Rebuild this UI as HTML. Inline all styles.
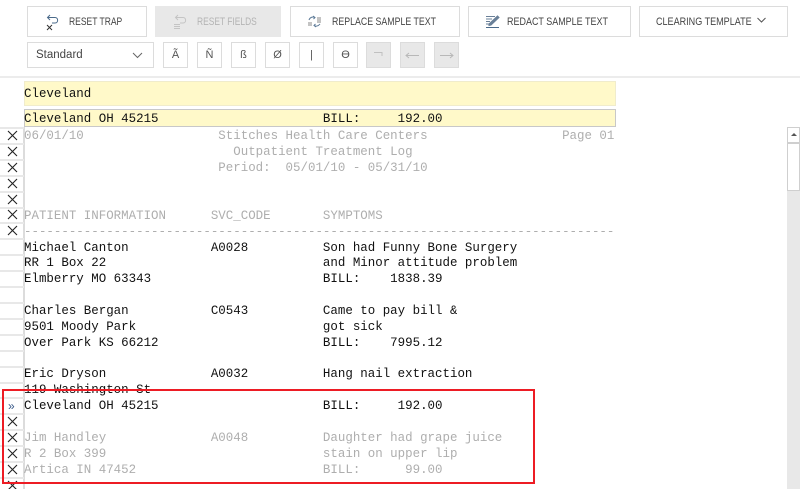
<!DOCTYPE html>
<html><head><meta charset="utf-8"><style>
html,body{margin:0;padding:0;background:#fff}
#p{position:relative;width:800px;height:489px;overflow:hidden;background:#fff;font-family:"Liberation Sans",sans-serif}
.a{position:absolute;box-sizing:border-box}
.b{position:absolute;box-sizing:border-box;border:1px solid #dcdcdc;background:#fff;height:31px;top:6px}
.t{position:absolute;white-space:pre;font-size:11px;line-height:12px;color:#444;top:16px;transform-origin:0 50%}
.c{position:absolute;box-sizing:border-box;top:42px;height:26px;width:25px;border:1px solid #dcdcdc;background:#fff;text-align:center;font-size:11px;line-height:25px;color:#555}
.d{background:#e8e8e8}
.l{position:absolute;left:24px;white-space:pre;font-family:"Liberation Mono",monospace;font-size:12.46px;line-height:16px;color:#111;height:16px;max-width:592px;overflow:hidden}
.g{color:#aeaeae}
.s{position:absolute;left:0;width:24px;height:2px;background:#e8e8e8}
</style></head><body><div id="p">

<div class="b" style="left:27px;width:120px"></div>
<svg class="a" style="left:45px;top:13px" width="15" height="18" viewBox="0 0 15 18" fill="none" stroke="#4a6a8a" stroke-width="1"><path d="M5 2L2.500 4.500L5 7M3 4.500H10C13.500 4.500 13.500 10 10 10H7"/><path d="M2 12L7 17M7 12L2 17" stroke="#333"/></svg>
<div class="t" style="left:69px;transform:scaleX(.775)">RESET TRAP</div>

<div class="b" style="left:155px;width:126px;background:#e8e8e8;border-color:#e8e8e8"></div>
<svg class="a" style="left:173px;top:13px" width="15" height="18" viewBox="0 0 15 18" fill="none" stroke="#c4c4c4" stroke-width="1"><path d="M5 2L2.500 4.500L5 7M3 4.500H10C13.500 4.500 13.500 10 10 10H7"/><path d="M1 11.500H7M1 13.500H7M1 15.500H7"/></svg>
<div class="t" style="left:197px;color:#b4b4b4;transform:scaleX(.766)">RESET FIELDS</div>

<div class="b" style="left:290px;width:170px"></div>
<svg class="a" style="left:307px;top:15px" width="15" height="13" viewBox="0 0 15 13" fill="none" stroke="#5a7896" stroke-width="1"><path d="M2 5C3 2 6 1.500 8 2.500M6 1L8 2.500L6.500 4"/><path d="M1 8H5M1 10H5" stroke="#888"/><path d="M10 3H14M10 5H14M10 7H14" stroke="#888"/><path d="M13 9C11 11.500 8.500 11.500 7 10.500M9 12L7 10.500L8.500 9"/></svg>
<div class="t" style="left:332px;transform:scaleX(.8)">REPLACE SAMPLE TEXT</div>

<div class="b" style="left:468px;width:163px"></div>
<svg class="a" style="left:485px;top:14px" width="15" height="15" viewBox="0 0 15 15" fill="none" stroke="#6a8098" stroke-width="1"><path d="M1 2.500H10M1 5H7M1 7.500H5M1 10H4"/><path d="M4 10L12.500 2L14 3.500L6 11L4 11.500Z" fill="#6a8098"/><path d="M1 13.500H14" stroke="#4a6a8a"/></svg>
<div class="t" style="left:507px;transform:scaleX(.816)">REDACT SAMPLE TEXT</div>

<div class="b" style="left:639px;width:149px"></div>
<div class="t" style="left:656px;transform:scaleX(.822)">CLEARING TEMPLATE</div>
<svg class="a" style="left:757px;top:17px" width="9" height="6" viewBox="0 0 9 6" fill="none" stroke="#555" stroke-width="1"><path d="M.5 1L4.500 5L8.500 1"/></svg>

<div class="a" style="left:27px;top:42px;width:127px;height:26px;border:1px solid #dcdcdc"></div>
<div class="a" style="left:36px;top:48px;font-size:11.500px;line-height:15px;color:#444">Standard</div>
<svg class="a" style="left:132px;top:52px" width="11" height="7" viewBox="0 0 11 7" fill="none" stroke="#666" stroke-width="1"><path d="M1 1L5.500 5.500L10 1"/></svg>

<div class="c" style="left:163px">Ã</div>
<div class="c" style="left:197px">Ñ</div>
<div class="c" style="left:231px">ß</div>
<div class="c" style="left:265px">Ø</div>
<div class="c" style="left:299px">|</div>
<div class="c" style="left:333px">ϴ</div>
<div class="c d" style="left:366px"></div>
<svg class="a" style="left:366px;top:42px" width="25" height="26" viewBox="0 0 25 26" fill="none" stroke="#c0c0c0" stroke-width="1"><path d="M8 10.500H16V14"/></svg>
<div class="c d" style="left:400px"></div>
<svg class="a" style="left:400px;top:42px" width="25" height="26" viewBox="0 0 25 26" fill="none" stroke="#b8b8b8" stroke-width="1"><path d="M6 13.500H19M9 11L6 13.500L9 16"/></svg>
<div class="c d" style="left:434px"></div>
<svg class="a" style="left:434px;top:42px" width="25" height="26" viewBox="0 0 25 26" fill="none" stroke="#b8b8b8" stroke-width="1"><path d="M6 13.500H19M16 11L19 13.500L16 16"/></svg>

<div class="a" style="left:0;top:76px;width:800px;height:2px;background:#ececec"></div>

<div class="a" style="left:24px;top:81px;width:592px;height:25px;background:#fff9c9;border:1px solid #f0eccc"></div>
<div class="l" style="top:86px">Cleveland</div>
<div class="a" style="left:24px;top:109px;width:592px;height:18px;background:#fff9c9;border:1px solid #c8c8c8"></div>

<div class="a" style="left:23px;top:127px;width:2px;height:362px;background:#dcdcdc"></div>

<div class="s" style="top:127px"></div><div class="s" style="top:143px"></div><div class="s" style="top:159px"></div><div class="s" style="top:175px"></div><div class="s" style="top:191px"></div><div class="s" style="top:207px"></div><div class="s" style="top:222px"></div><div class="s" style="top:238px"></div><div class="s" style="top:254px"></div><div class="s" style="top:270px"></div><div class="s" style="top:286px"></div><div class="s" style="top:302px"></div><div class="s" style="top:318px"></div><div class="s" style="top:334px"></div><div class="s" style="top:350px"></div><div class="s" style="top:366px"></div><div class="s" style="top:382px"></div><div class="s" style="top:397px"></div><div class="s" style="top:413px"></div><div class="s" style="top:429px"></div><div class="s" style="top:445px"></div><div class="s" style="top:461px"></div><div class="s" style="top:477px"></div>

<svg class="a" style="left:0;top:127px" width="24" height="362" viewBox="0 0 24 362" fill="none" stroke="#222" stroke-width="1.100"><path d="M8 4L17 13M17 4L8 13M8 20L17 29M17 20L8 29M8 36L17 45M17 36L8 45M8 52L17 61M17 52L8 61M8 68L17 77M17 68L8 77M8 83L17 92M17 83L8 92M8 99L17 108M17 99L8 108M8 290L17 299M17 290L8 299M8 306L17 315M17 306L8 315M8 322L17 331M17 322L8 331M8 338L17 347M17 338L8 347M8 354L17 363M17 354L8 363"/></svg>
<div class="a" style="left:8px;top:399px;font-size:12px;line-height:14px;color:#3a5a8a">»</div>

<div class="l" style="top:111px">Cleveland OH 45215                      BILL:     192.00</div>
<div class="l g" style="top:128px">06/01/10                  Stitches Health Care Centers                  Page 01</div>
<div class="l g" style="top:144px">                            Outpatient Treatment Log</div>
<div class="l g" style="top:160px">                          Period:  05/01/10 - 05/31/10</div>
<div class="l g" style="top:208px">PATIENT INFORMATION      SVC_CODE       SYMPTOMS</div>
<div class="l g" style="top:224px">-------------------------------------------------------------------------------</div>
<div class="l" style="top:240px">Michael Canton           A0028          Son had Funny Bone Surgery</div>
<div class="l" style="top:255px">RR 1 Box 22                             and Minor attitude problem</div>
<div class="l" style="top:271px">Elmberry MO 63343                       BILL:    1838.39</div>
<div class="l" style="top:303px">Charles Bergan           C0543          Came to pay bill &amp;</div>
<div class="l" style="top:319px">9501 Moody Park                         got sick</div>
<div class="l" style="top:335px">Over Park KS 66212                      BILL:    7995.12</div>
<div class="l" style="top:366px">Eric Dryson              A0032          Hang nail extraction</div>
<div class="l" style="top:382px">119 Washington St</div>
<div class="l" style="top:398px">Cleveland OH 45215                      BILL:     192.00</div>
<div class="l g" style="top:430px">Jim Handley              A0048          Daughter had grape juice</div>
<div class="l g" style="top:446px">R 2 Box 399                             stain on upper lip</div>
<div class="l g" style="top:462px">Artica IN 47452                         BILL:      99.00</div>

<div class="a" style="left:2px;top:389px;width:533px;height:95px;border:2px solid #ed1c24"></div>

<div class="a" style="left:787px;top:127px;width:13px;height:362px;background:#e8e8e8"></div>
<div class="a" style="left:787px;top:127px;width:13px;height:16px;background:#fff;border:1px solid #cfcfcf"></div>
<div class="a" style="left:791px;top:133px;width:0;height:0;border-left:3px solid transparent;border-right:3px solid transparent;border-bottom:3px solid #555"></div>
<div class="a" style="left:787px;top:143px;width:13px;height:48px;background:#fff;border:1px solid #cfcfcf"></div>

</div></body></html>
